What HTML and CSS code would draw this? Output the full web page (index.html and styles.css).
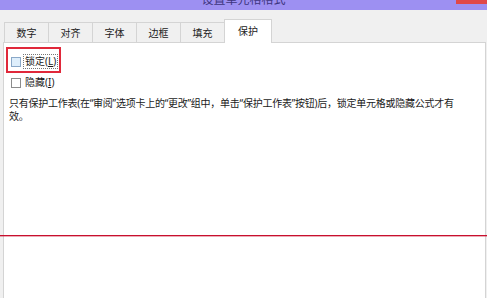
FILE: index.html
```html
<!DOCTYPE html>
<html lang="zh-CN">
<head>
<meta charset="utf-8">
<title>设置单元格格式</title>
<link rel="stylesheet" href="styles.css">
</head>
<body>
<div class="window">
  <div class="titlebar">
    <div class="title">设置单元格格式</div>
    <div class="close"></div>
  </div>
  <div class="tabstrip">
    <div class="tab">数字</div>
    <div class="tab">对齐</div>
    <div class="tab">字体</div>
    <div class="tab">边框</div>
    <div class="tab">填充</div>
    <div class="tab tab-active">保护</div>
  </div>
  <div class="pane">
    <div class="highlight"></div>
    <label class="check-row">
      <span class="box box-hover"></span>
      <span class="label focus">锁定(<u>L</u>)</span>
    </label>
    <label class="check-row row-second">
      <span class="box"></span>
      <span class="label">隐藏(<u>I</u>)</span>
    </label>
    <p class="note">只有保护工作表(在“审阅”选项卡上的“更改”组中，单击“保护工作表”按钮)后，锁定单元格或隐藏公式才有效。</p>
  </div>
</div>
<div class="redline"></div>
</body>
</html>
```
FILE: styles.css
```css
html, body {
  margin: 0;
  padding: 0;
  height: 100%;
}
body {
  background: #f0f0f0;
  font-family: "Noto Sans", "Noto Sans CJK SC", sans-serif;
  font-size: 10px;
  color: #1a1a1a;
  overflow: hidden;
  position: relative;
}
.window {
  display: flex;
  flex-direction: column;
  height: 298px;
}
.titlebar {
  height: 10px;
  background: #9d90f2;
  position: relative;
  overflow: hidden;
  flex: none;
}
.title {
  text-align: center;
  font-size: 12px;
  line-height: 16px;
  margin-top: -8px;
  color: #3d3580;
}
.close {
  position: absolute;
  top: 0;
  right: 0;
  width: 31px;
  height: 4px;
  background: #e04848;
}
.tabstrip {
  flex: none;
  height: 32px;
  display: flex;
  align-items: flex-end;
  padding-left: 4px;
  box-sizing: border-box;
}
.tab {
  box-sizing: border-box;
  width: 45px;
  height: 20px;
  margin-right: -1px;
  border: 1px solid #d4d4d4;
  border-bottom: none;
  background: #f0f0f0;
  display: flex;
  align-items: center;
  justify-content: center;
  line-height: 1;
  color: #222;
}
.tab-active {
  width: 48px;
  height: 24px;
  margin-bottom: -1px;
  background: #fff;
  position: relative;
  z-index: 1;
  padding-bottom: 2px;
}
.pane {
  flex: 1;
  margin: 0 1px 0 3px;
  background: #fff;
  border: 1px solid #d4d4d4;
  border-bottom: none;
  padding: 11px 20px 0 5px;
  position: relative;
}
.highlight {
  position: absolute;
  left: 2px;
  top: 4px;
  width: 55px;
  height: 26px;
  border: 2px solid #e0283a;
  box-sizing: border-box;
}
.check-row {
  display: flex;
  align-items: center;
  height: 15px;
  margin-left: 2px;
}
.row-second {
  margin-top: 6px;
}
.box {
  box-sizing: border-box;
  width: 10px;
  height: 10px;
  border: 1px solid #8c8c8c;
  background: #fff;
  margin-right: 2px;
  flex: none;
}
.box-hover {
  background: #deeefb;
  border-color: #8aa8c8;
}
.label {
  line-height: 13px;
  padding: 0 1px;
  border: 1px solid transparent;
}
.focus {
  border: 1px dotted #777;
}
.note {
  margin: 7px 0 0 0;
  line-height: 13px;
  letter-spacing: -0.25px;
}
.redline {
  position: absolute;
  left: 0;
  right: 0;
  top: 235px;
  height: 1px;
  background: #c8102e;
  box-shadow: 0 1px 0 rgba(200, 16, 46, 0.35);
}
```
